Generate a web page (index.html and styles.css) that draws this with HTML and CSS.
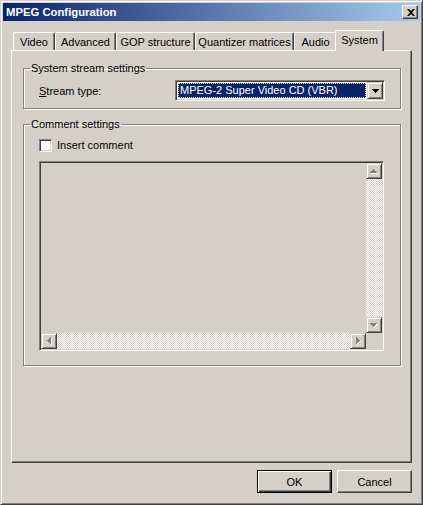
FILE: index.html
```html
<!DOCTYPE html>
<html lang="en">
<head>
    <meta charset="UTF-8">
    <meta name="viewport" content="width=device-width, initial-scale=1.0">
    <title>MPEG Configuration</title>
    <link rel="stylesheet" href="styles.css">
</head>
<body>
    <div class="window">
        <div class="caption">
            <span class="caption-title">MPEG Configuration</span>
            <span class="caption-close">
                <svg width="8" height="7" viewBox="0 0 8 7"><path d="M0 0h2l2 2 2-2h2L5 3.5 8 7H6L4 5 2 7H0l3-3.5z" fill="#000"/></svg>
            </span>
        </div>
        <div class="client">
            <div class="tabs">
                <div class="tab tab-video">Video</div>
                <div class="tab tab-advanced">Advanced</div>
                <div class="tab tab-gop">GOP structure</div>
                <div class="tab tab-quant">Quantizer matrices</div>
                <div class="tab tab-audio">Audio</div>
                <div class="tab tab-system tab-active">System</div>
            </div>
            <div class="panel">
                <fieldset class="group group-stream">
                    <legend>System stream settings</legend>
                    <div class="field-row">
                        <label class="field-label"><u>S</u>tream type:</label>
                        <div class="combo">
                            <div class="combo-value"><span class="combo-focus">MPEG-2 Super Video CD (VBR)</span></div>
                            <div class="combo-button">
                                <svg width="7" height="4" viewBox="0 0 7 4"><path d="M0 0h7v1H6v1H5v1H4v1H3V3H2V2H1V1H0z" fill="#000"/></svg>
                            </div>
                        </div>
                    </div>
                </fieldset>
                <fieldset class="group group-comment">
                    <legend>Comment settings</legend>
                    <label class="check"><span class="check-box"></span>Insert comment</label>
                    <div class="memo">
                        <div class="memo-text"></div>
                        <div class="vscroll">
                            <div class="scroll-btn">
                                <svg width="8" height="5" viewBox="0 0 8 5"><path d="M4 1h1v1h1v1h1v1h1v1H1V4h1V3h1V2h1z" fill="#fff"/><path d="M3 0h1v1h1v1h1v1h1v1H0V3h1V2h1V1h1z" fill="#808080"/></svg>
                            </div>
                            <div class="scroll-track"></div>
                            <div class="scroll-btn">
                                <svg width="8" height="5" viewBox="0 0 8 5"><path d="M1 1h7v1H7v1H6v1H5v1H4V4H3V3H2V2H1z" fill="#fff"/><path d="M0 0h7v1H6v1H5v1H4v1H3V3H2V2H1V1H0z" fill="#808080"/></svg>
                            </div>
                        </div>
                        <div class="hscroll">
                            <div class="scroll-btn">
                                <svg width="5" height="8" viewBox="0 0 5 8"><path d="M4 1h1v7H4V7H3V6H2V5H1V4h1V3h1V2h1z" fill="#fff"/><path d="M3 0h1v7H3V6H2V5H1V4H0V3h1V2h1V1h1z" fill="#808080"/></svg>
                            </div>
                            <div class="scroll-track"></div>
                            <div class="scroll-btn">
                                <svg width="5" height="8" viewBox="0 0 5 8"><path d="M1 1h1v1h1v1h1v1h1v1H4v1H3v1H2v1H1z" fill="#fff"/><path d="M0 0h1v1h1v1h1v1h1v1H3v1H2v1H1v1H0z" fill="#808080"/></svg>
                            </div>
                        </div>
                        <div class="scroll-corner"></div>
                    </div>
                </fieldset>
            </div>
            <div class="buttons">
                <button class="btn btn-default">OK</button>
                <button class="btn">Cancel</button>
            </div>
        </div>
    </div>
</body>
</html>
```

FILE: styles.css
```css
body {
    margin: 0;
    font-family: "Liberation Sans", Arial, sans-serif;
    font-size: 11px;
    line-height: 13px;
    color: #000;
    background: #d4d0c8;
}

/* window frame */
.window {
    width: 423px;
    height: 505px;
    box-sizing: border-box;
    border: 1px solid;
    border-color: #d4d0c8 #404040 #404040 #d4d0c8;
    box-shadow: inset 1px 1px #fff, inset -1px -1px #808080;
    padding: 2px;
    background: #d4d0c8;
}
.caption {
    height: 18px;
    display: flex;
    align-items: center;
    justify-content: space-between;
    padding: 0 2px 0 3px;
    background: linear-gradient(to right, #0a246a, #a6caf0);
}
.caption-title {
    color: #fff;
    font-weight: bold;
    font-size: 11.3px;
}
.caption-close {
    width: 16px;
    height: 14px;
    box-sizing: border-box;
    display: flex;
    align-items: center;
    justify-content: center;
    padding-left: 1px;
    background: #d4d0c8;
    border: 1px solid;
    border-color: #fff #404040 #404040 #fff;
    box-shadow: inset -1px -1px #808080;
}

.client {
    padding: 0 8px;
}

/* tabs */
.tabs {
    display: flex;
    align-items: flex-end;
    height: 20px;
    margin-top: 9px;
    padding-left: 2px;
}
.tab {
    height: 18px;
    box-sizing: border-box;
    padding-top: 3px;
    text-align: center;
    white-space: nowrap;
    border: 1px solid;
    border-bottom: 0;
    border-color: #fff #404040 transparent #fff;
    border-radius: 2px 2px 0 0;
    box-shadow: inset -1px 0 #808080;
    background: #d4d0c8;
}
.tab-video { width: 42px; }
.tab-advanced { width: 61px; }
.tab-gop { width: 79px; }
.tab-quant { width: 99px; }
.tab-audio { width: 43px; }
.tab-system { width: 49px; }
.tab-active {
    height: 21px;
    margin: 0 -2px -1px -2px;
    position: relative;
    z-index: 1;
}

.panel {
    height: 413px;
    box-sizing: border-box;
    border: 1px solid;
    border-color: #fff #404040 #404040 #fff;
    box-shadow: inset -1px -1px #808080;
    padding: 11px 10px 0 11px;
}

/* group boxes */
.group {
    margin: 0;
    padding: 0;
    border: 1px solid #808080;
    box-shadow: 1px 1px 0 #fff, inset 1px 1px 0 #fff;
    min-width: 0;
}
.group legend {
    margin-left: 6px;
    padding: 0 1px;
}
.group-stream {
    padding: 5px 0 7px 0;
}
.group-comment {
    margin-top: 9px;
    padding: 8px 0 14px 0;
}

.field-row {
    display: flex;
    align-items: flex-start;
    margin-left: 15px;
}
.field-label {
    width: 136px;
    margin-top: 5px;
}

/* combo box */
.combo {
    width: 210px;
    height: 21px;
    box-sizing: border-box;
    display: flex;
    border: 1px solid;
    border-color: #808080 #fff #fff #808080;
    box-shadow: inset 1px 1px #404040, inset -1px -1px #d4d0c8;
    padding: 1px;
    background: #fff;
}
.combo-value {
    flex: 1;
    padding: 1px;
    display: flex;
}
.combo-focus {
    flex: 1;
    box-sizing: border-box;
    height: 15px;
    background: #0a246a;
    color: #fff;
    border: 1px dotted #f5db95;
    padding-left: 1px;
    line-height: 13px;
    white-space: nowrap;
}
.combo-button {
    width: 16px;
    height: 17px;
    box-sizing: border-box;
    display: flex;
    align-items: center;
    justify-content: center;
    background: #d4d0c8;
    border: 1px solid;
    border-color: #d4d0c8 #404040 #404040 #d4d0c8;
    box-shadow: inset 1px 1px #fff, inset -1px -1px #808080;
}

/* checkbox */
.check {
    display: flex;
    align-items: flex-start;
    height: 13px;
    margin-left: 15px;
}
.check-box {
    width: 13px;
    height: 13px;
    box-sizing: border-box;
    margin-right: 5px;
    background: #fff;
    border: 1px solid;
    border-color: #808080 #fff #fff #808080;
    box-shadow: inset 1px 1px #404040, inset -1px -1px #d4d0c8;
}

/* memo with scrollbars */
.memo {
    width: 345px;
    height: 190px;
    box-sizing: border-box;
    margin: 9px 0 0 15px;
    border: 1px solid;
    border-color: #808080 #fff #fff #808080;
    box-shadow: inset 1px 1px #404040, inset -1px -1px #d4d0c8;
    padding: 1px;
    display: grid;
    grid-template-columns: 1fr 16px;
    grid-template-rows: 1fr 16px;
}
.vscroll {
    display: flex;
    flex-direction: column;
}
.hscroll {
    display: flex;
}
.scroll-btn {
    width: 16px;
    height: 16px;
    flex: none;
    box-sizing: border-box;
    display: flex;
    align-items: center;
    justify-content: center;
    background: #d4d0c8;
    border: 1px solid;
    border-color: #d4d0c8 #404040 #404040 #d4d0c8;
    box-shadow: inset 1px 1px #fff, inset -1px -1px #808080;
}
.scroll-track {
    flex: 1;
    background-image: conic-gradient(#fff 25%, #d4d0c8 0 50%, #fff 0 75%, #d4d0c8 0);
    background-size: 2px 2px;
}

/* dialog buttons */
.buttons {
    display: flex;
    justify-content: flex-end;
    gap: 5px;
    margin-top: 7px;
}
.btn {
    width: 75px;
    height: 23px;
    box-sizing: border-box;
    font-family: inherit;
    font-size: 11px;
    color: #000;
    background: #d4d0c8;
    border: 1px solid;
    border-color: #fff #404040 #404040 #fff;
    box-shadow: inset -1px -1px #808080;
    padding: 0;
}
.btn-default {
    border-color: #000;
    box-shadow: inset 1px 1px #fff, inset -1px -1px #404040, inset -2px -2px #808080;
}
```
